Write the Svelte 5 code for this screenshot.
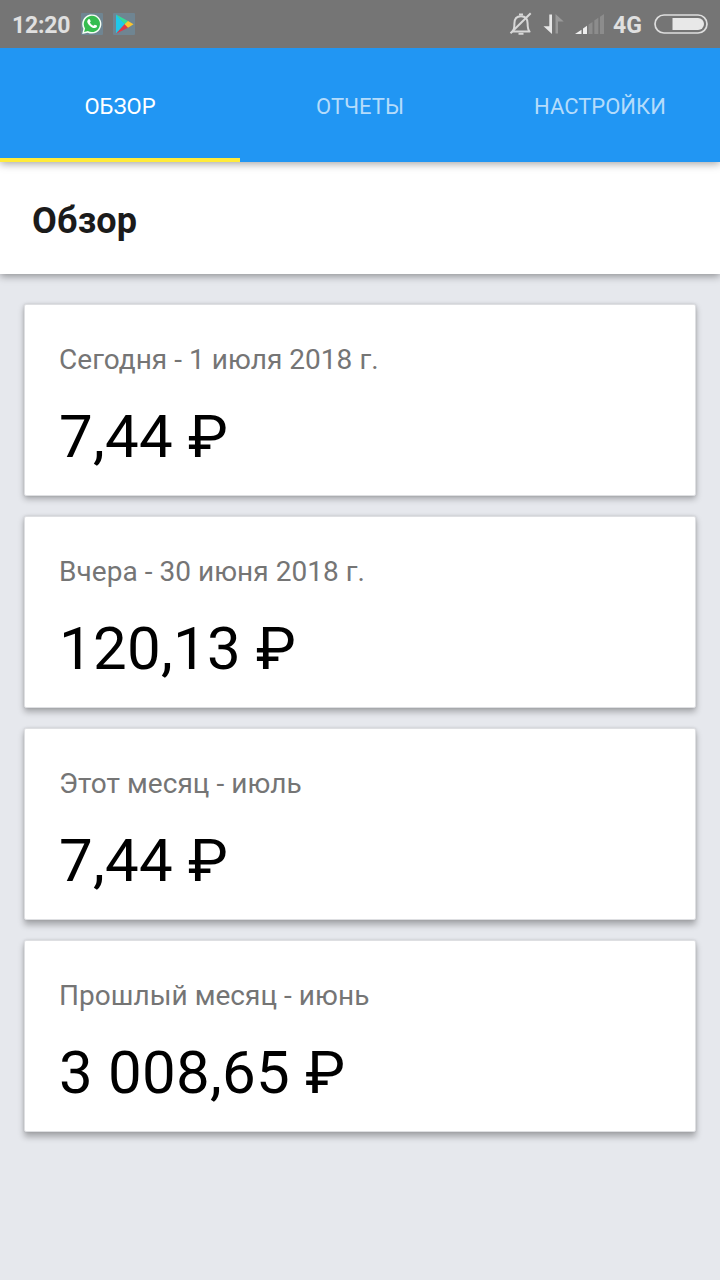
<script>
  const tabs = ['ОБЗОР', 'ОТЧЕТЫ', 'НАСТРОЙКИ'];
  const cards = [
    { label: 'Сегодня - 1 июля 2018 г.', value: '7,44 ₽' },
    { label: 'Вчера - 30 июня 2018 г.', value: '120,13 ₽' },
    { label: 'Этот месяц - июль', value: '7,44 ₽' },
    { label: 'Прошлый месяц - июнь', value: '3 008,65 ₽' }
  ];
</script>

<div class="screen">
  <div class="status">
    <span class="clock">12:20</span>
    <svg class="app-icon first" viewBox="0 0 22 22">
      <rect width="22" height="22" rx="1" fill="#6f8592" />
      <path d="M1.200 21 2.400 15.700A9.600 9.600 0 1 1 6.700 19.700Z" fill="#f4fff5" />
      <path d="M3.100 19.100 4.100 15.400A8.100 8.100 0 1 1 6.900 18Z" fill="#35bd50" />
      <path d="M7.300 6.400c.6-.6 1.300-.5 1.600.1l.8 1.800c.1.4-.6 1-.8 1.300.8 1.600 2 2.600 3.600 3.200.4-.4.900-1.300 1.400-1.100l1.900.9c.6.3.1 1.500-.5 2-1.200.9-3.100.5-5.100-.7-2-1.300-3.600-3.400-3.900-4.900-.2-1 .3-2 1-2.600Z" fill="#fff" />
    </svg>
    <svg class="app-icon" viewBox="0 0 22 22">
      <rect width="22" height="22" rx="1" fill="#6f8592" />
      <path d="M3 1.500 12 11 3 20.500Z" fill="#20c8ea" />
      <path d="M3 1.500 15.500 8.200 12 11.500Z" fill="#35dc9a" />
      <path d="M3 20.800 11.800 11 15.500 14.500Z" fill="#dd3949" />
      <path d="M15 8 20.500 11.200 15 14.800 11.600 11.300Z" fill="#fbc52e" />
    </svg>
    <span class="spacer"></span>
    <svg class="bell" viewBox="0 0 24 26" fill="none" stroke="#d8d8d8" stroke-width="2">
      <path d="M3.500 20.600C5.500 18.500 5.400 16 5.400 12.500 5.400 8.400 7.500 5.200 12 5.200c4.500 0 6.600 3.200 6.600 7.300 0 3.500 0 6 2 8.100Z" stroke-linejoin="round" />
      <path d="M10 3.500h4M9.500 22.800h5" />
      <path d="M1.500 22.300 21.700 2.200" />
    </svg>
    <svg class="data" viewBox="0 0 22 22">
      <path d="M6.300 1.500H9V21L.5 13.300H6.300Z" fill="#e8e8e8" />
      <path d="M12.500 1 20.700 8.400H15V20.500H12.500Z" fill="#999" />
    </svg>
    <svg class="signal" viewBox="0 0 30 20">
      <path d="M0 20 6.500 15.800V20Z" fill="#eee" />
      <path d="M8 14.500 12 11.700V20H8Z" fill="#eee" />
      <path d="M13.500 10.400 17.500 7.900V20H13.500ZM19.300 6.400 23.300 3.700V20H19.300ZM25 2.700 29 0V20H25Z" fill="#8c8c8c" />
    </svg>
    <span class="network">4G</span>
    <svg class="battery" viewBox="0 0 54 20">
      <rect x="1" y="1" width="52" height="18" rx="9" fill="none" stroke="#dedede" stroke-width="1.700" />
      <path d="M18.500 4H44a6 6 0 0 1 0 12H18.500Z" fill="#e8e8e8" />
    </svg>
  </div>

  <nav>
    {#each tabs as tab, i}
      <div class="tab" class:active={i === 0}>{tab}</div>
    {/each}
  </nav>

  <header><h1>Обзор</h1></header>

  <main>
    {#each cards as card, i}
      <section style:--depth="{3 + i * 0.6}px">
        <p class="label">{card.label}</p>
        <p class="value">{card.value}</p>
      </section>
    {/each}
  </main>
</div>

<style>
  :global(body) {
    margin: 0;
  }
  .screen {
    width: 720px;
    height: 1280px;
    display: flex;
    flex-direction: column;
    overflow: hidden;
    background: #e6e8ed;
    font-family: Roboto, sans-serif;
  }
  .status {
    height: 48px;
    flex: none;
    box-sizing: border-box;
    padding: 0 12px;
    display: flex;
    align-items: center;
    background: #757575;
    color: #e0e0e0;
    font-size: 23px;
    font-weight: 700;
    position: relative;
    z-index: 3;
  }
  .clock {
    width: 69px;
    white-space: nowrap;
    padding-top: 2px;
    letter-spacing: -0.200px;
  }
  .app-icon {
    width: 22px;
    height: 22px;
  }
  .app-icon.first {
    margin-right: 10px;
  }
  .spacer {
    flex: 1;
  }
  .bell {
    width: 24px;
    height: 26px;
    margin-right: 10px;
  }
  .data {
    width: 22px;
    height: 22px;
    margin-right: 10px;
  }
  .signal {
    width: 30px;
    height: 20px;
    margin-right: 8px;
  }
  .network {
    width: 41px;
    padding-top: 2px;
  }
  .battery {
    width: 54px;
    height: 20px;
  }
  nav {
    height: 114px;
    flex: none;
    display: grid;
    grid-template-columns: repeat(3, 240px);
    background: #2196f3;
    box-shadow: 0 2px 8px rgba(0, 0, 0, 0.35);
    position: relative;
    z-index: 2;
  }
  .tab {
    display: flex;
    align-items: center;
    justify-content: center;
    box-sizing: border-box;
    padding-top: 6px;
    border-bottom: 4px solid transparent;
    color: #b5dcfb;
    font-size: 22px;
  }
  .tab.active {
    color: #fff;
    border-color: #ffeb3b;
  }
  header {
    height: 112px;
    flex: none;
    box-sizing: border-box;
    padding: 5px 32px 0;
    display: flex;
    align-items: center;
    background: #fff;
    box-shadow: 0 2px 8px rgba(0, 0, 0, 0.4);
    position: relative;
    z-index: 1;
  }
  h1 {
    margin: 0;
    color: #1b1b1b;
    font-size: 36px;
    line-height: 42px;
    font-weight: 700;
    letter-spacing: 0.150px;
  }
  main {
    padding: 30px 24px;
    display: flex;
    flex-direction: column;
    gap: 20px;
  }
  section {
    height: 192px;
    box-sizing: border-box;
    padding: 38px 34px 0;
    background: #fff;
    border: 1px solid #dedfe2;
    border-radius: 2px;
    box-shadow: 0 var(--depth) 6px rgba(0, 0, 0, 0.28), 0 0 3px rgba(0, 0, 0, 0.12);
  }
  p {
    margin: 0;
    white-space: nowrap;
  }
  .label {
    color: #757575;
    font-size: 28px;
    line-height: 33px;
    letter-spacing: 0.040px;
  }
  .value {
    margin-top: 25px;
    color: #000;
    font-size: 60px;
    line-height: 71px;
    letter-spacing: 0.250px;
  }
</style>
